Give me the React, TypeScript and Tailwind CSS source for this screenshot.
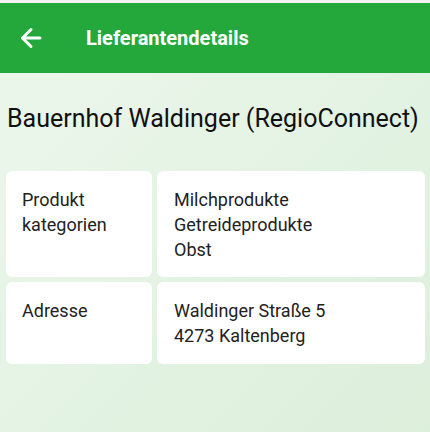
import React from 'react';

const rows = [
  { label: ['Produkt', 'kategorien'], value: ['Milchprodukte', 'Getreideprodukte', 'Obst'] },
  { label: ['Adresse'], value: ['Waldinger Straße 5', '4273 Kaltenberg'] },
];

export default function App() {
  return (
    <div
      className="h-[432px] w-full overflow-hidden bg-gradient-to-br from-[#ecf7ec] to-[#dcefdb] text-[#1c1c1c]"
      style={{ fontFamily: 'Roboto, "Noto Sans", sans-serif' }}
    >
      {/* Statusleiste oben */}
      <div className="h-[3px] bg-[#f2f2f2]" />

      {/* Kopfzeile */}
      <header className="flex h-[70px] items-center bg-[#25a83b] pl-[20px] text-white">
        <svg width="22" height="22" viewBox="0 0 22 22" fill="none" stroke="white" strokeWidth="3" strokeLinecap="round" strokeLinejoin="round">
          <path d="M2.5 11H20" />
          <path d="M11 2.5 2.5 11 11 19.5" />
        </svg>
        <h1 className="ml-[44px] text-[20px] font-bold leading-none">Lieferantendetails</h1>
      </header>

      <h2 className="mt-[30px] pl-[7px] text-[25px] leading-[32px] text-[#111]">
        Bauernhof Waldinger (RegioConnect)
      </h2>

      <div className="mt-[36px] grid grid-cols-[146px_1fr] grid-rows-[106px_82px] gap-[5px] pl-[6px] pr-[5px] text-[18px] leading-[24.75px] text-[#222]">
        {rows.map((row, i) => (
          <React.Fragment key={i}>
            <div className="rounded-[6px] bg-white pl-[16px] pt-[17px]">
              {row.label.map((l) => (
                <div key={l}>{l}</div>
              ))}
            </div>
            <div className="rounded-[6px] bg-white pl-[17px] pt-[17px]">
              {row.value.map((v) => (
                <div key={v}>{v}</div>
              ))}
            </div>
          </React.Fragment>
        ))}
      </div>
    </div>
  );
}
